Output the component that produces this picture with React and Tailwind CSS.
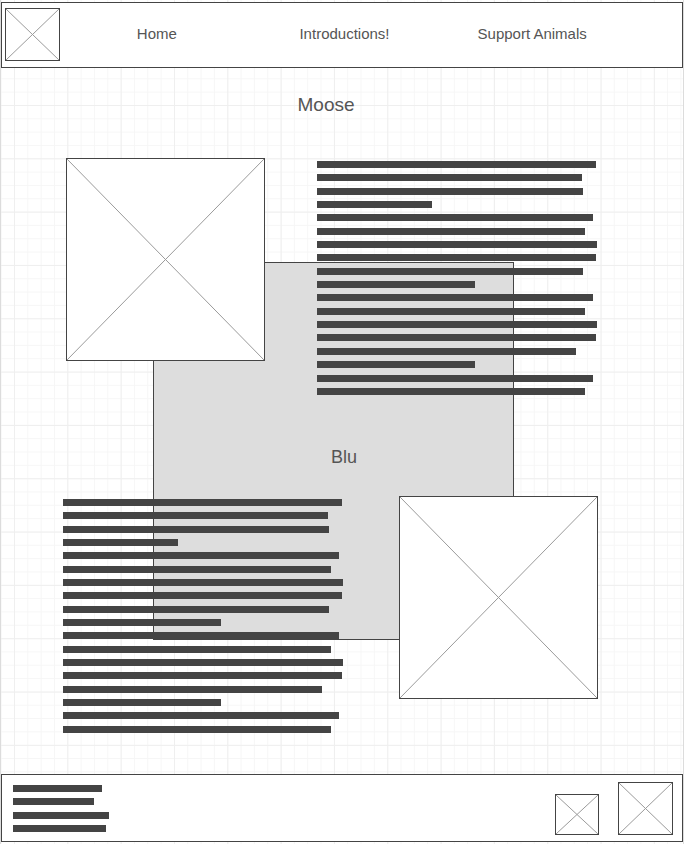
import React from "react";

function Placeholder({ className }) {
  return (
    <div className={"border border-[#444] bg-white shrink-0 " + className}>
      <svg className="block w-full h-full" viewBox="0 0 100 100" preserveAspectRatio="none">
        <line x1="0" y1="0" x2="100" y2="100" stroke="#9a9a9a" strokeWidth="1" vectorEffect="non-scaling-stroke" />
        <line x1="100" y1="0" x2="0" y2="100" stroke="#9a9a9a" strokeWidth="1" vectorEffect="non-scaling-stroke" />
      </svg>
    </div>
  );
}

const widths = [279, 265, 266, 115, 276, 268, 280, 279, 266, 158, 276, 268, 280, 279, 259, 158, 276, 268];

function Bars({ list }) {
  return (
    <div className="flex flex-col gap-[6.35px]">
      {list.map((w, i) => (
        <div key={i} className="h-[7px] bg-[#444]" style={{ width: w }} />
      ))}
    </div>
  );
}

export default function App() {
  return (
    <div
      className="relative w-[684px] h-[844px] flex flex-col border-x border-[#dcdcdc] bg-white [background-image:linear-gradient(to_right,#efefef_1px,transparent_1px),linear-gradient(to_bottom,#efefef_1px,transparent_1px),linear-gradient(to_right,#f6f6f6_1px,transparent_1px),linear-gradient(to_bottom,#f6f6f6_1px,transparent_1px)] [background-size:53.333px_53.333px,53.333px_53.333px,13.333px_13.333px,13.333px_13.333px] [background-position:13px_51.67px]"
      style={{ fontFamily: '"Liberation Sans", Arial, sans-serif' }}
    >
      {/* grey background panel behind content */}
      <div className="absolute left-[152px] top-[262px] w-[361px] h-[378px] bg-[#dddddd] border border-[#444] flex items-center justify-center pl-[21px] pt-[12px]">
        <span className="text-[18px] leading-none text-[#555]">Blu</span>
      </div>

      {/* header */}
      <header className="relative mt-[2px] h-[66px] border border-[#444] bg-white flex items-center">
        <Placeholder className="ml-[3px] w-[55px] h-[53px] -mt-[1px]" />
        <nav className="ml-[3px] w-[563px] grid grid-cols-3 text-center text-[15px] text-[#555] -mt-[1px]">
          <span>Home</span>
          <span>Introductions!</span>
          <span>Support Animals</span>
        </nav>
      </header>

      <div className="relative mt-[26px] h-[22px] flex items-center justify-center pr-[32px] text-[19px] text-[#555]">
        Moose
      </div>

      {/* row 1 */}
      <div className="relative mt-[42px] flex items-start pl-[65px]">
        <Placeholder className="w-[199px] h-[203px]" />
        <div className="ml-[52px] pt-[3px]">
          <Bars list={widths} />
        </div>
      </div>

      {/* row 2 */}
      <div className="relative mt-[101px] flex items-start pl-[62px]">
        <div className="w-[280px] pt-[3px] shrink-0">
          <Bars list={widths} />
        </div>
        <Placeholder className="ml-[56px] w-[199px] h-[203px]" />
      </div>

      {/* footer */}
      <footer className="relative mt-auto mb-[2px] h-[68px] border border-[#444] bg-white flex justify-between items-start">
        <div className="ml-[11px] mt-[10px] flex flex-col gap-[6.35px]">
          <div className="h-[7px] w-[89px] bg-[#444]" />
          <div className="h-[7px] w-[81px] bg-[#444]" />
          <div className="h-[7px] w-[96px] bg-[#444]" />
          <div className="h-[7px] w-[93px] bg-[#444]" />
        </div>
        <div className="self-end mb-[6px] mr-[9px] flex items-end gap-[19px]">
          <Placeholder className="w-[44px] h-[41px]" />
          <Placeholder className="w-[55px] h-[53px]" />
        </div>
      </footer>
    </div>
  );
}
